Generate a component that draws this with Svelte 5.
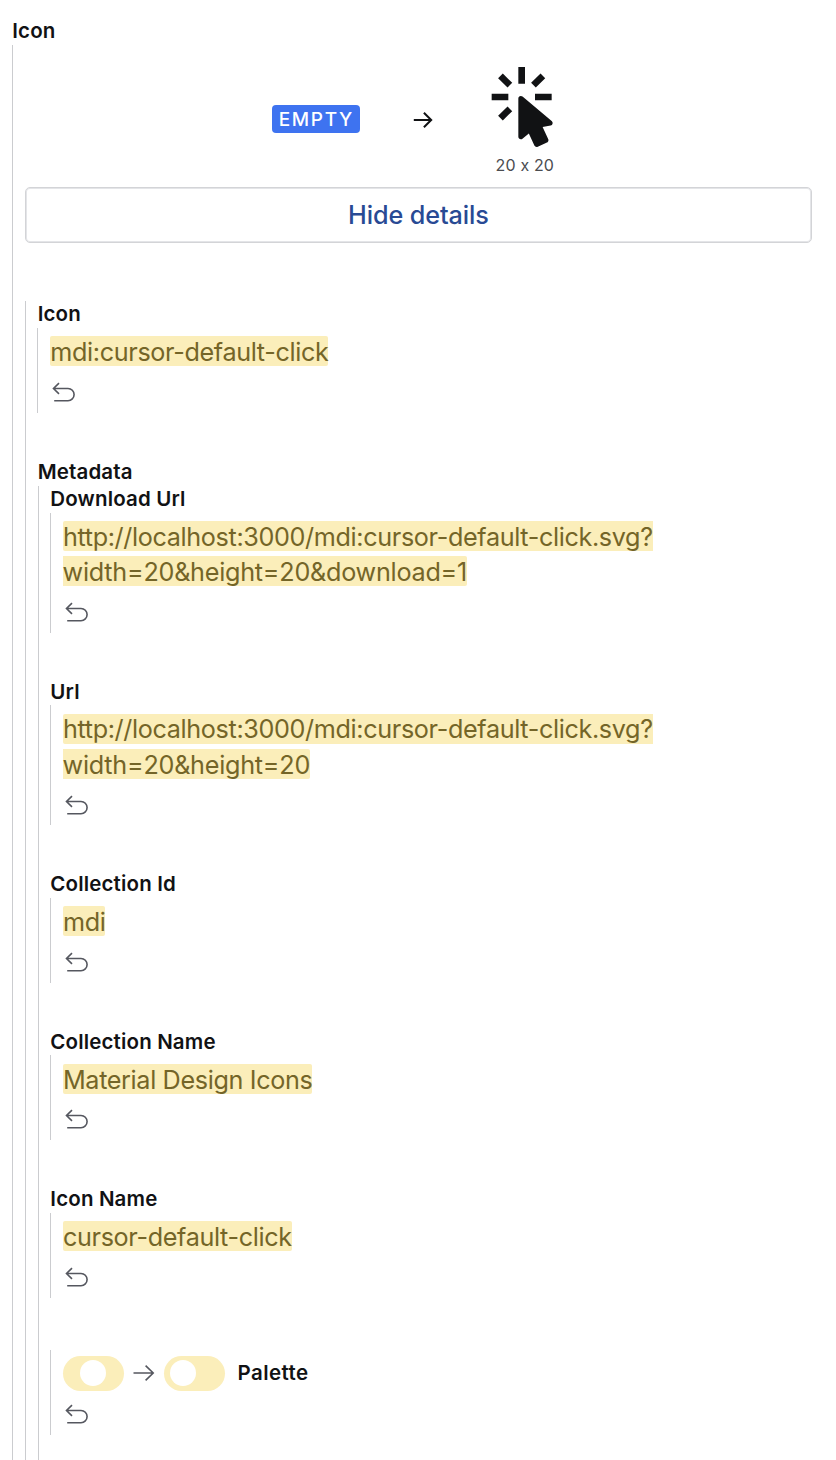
<script>
  const details = [
    { label: 'Download Url', lines: ['http://localhost:3000/mdi:cursor-default-click.svg?', 'width=20&height=20&download=1'] },
    { label: 'Url', lines: ['http://localhost:3000/mdi:cursor-default-click.svg?', 'width=20&height=20'] },
    { label: 'Collection Id', lines: ['mdi'] },
    { label: 'Collection Name', lines: ['Material Design Icons'] },
    { label: 'Icon Name', lines: ['cursor-default-click'] },
  ];
</script>

{#snippet undo()}
  <button class="undo" aria-label="Revert">
    <svg width="24" height="22" viewBox="0 0 24 22">
      <path d="M7 1.2 1.5 6.5 7 11.8M1.7 6.5H16a6.1 6.1 0 0 1 0 12.2H2.2" />
    </svg>
  </button>
{/snippet}

{#snippet field(label, lines)}
  <section class="field">
    <h3>{label}</h3>
    <div class="body leaf">
      <div class="value">
        <ins>{#each lines as line, i}{#if i > 0}<br />{/if}<span class:second={i > 0}>{line}</span>{/each}</ins>
      </div>
      {@render undo()}
    </div>
  </section>
{/snippet}

<main>
  <h3>Icon</h3>
  <div class="body root">
    <div class="preview">
      <span class="empty">EMPTY</span>
      <svg class="arrow" width="20" height="18" viewBox="0 0 20 18">
        <path d="M.8 9H18M10.9 1.7 18.2 9l-7.3 7.3" />
      </svg>
      <figure>
        <svg width="80" height="80" viewBox="0 0 24 24">
          <path d="M10.76,8.69A0.76,0.76 0 0,0 10,9.45V20.9C10,21.32 10.34,21.66 10.76,21.66C10.95,21.66 11.11,21.6 11.24,21.5L13.15,19.95L14.81,23.57C14.94,23.84 15.21,24 15.5,24C15.61,24 15.72,24 15.83,23.92L18.59,22.64C18.97,22.46 19.15,22 18.95,21.63L17.28,18L19.69,17.55C19.85,17.5 20,17.43 20.12,17.29C20.39,16.97 20.35,16.5 20,16.21L11.26,8.86L11.25,8.87C11.12,8.76 10.95,8.69 10.76,8.69M15,10V8H20V10H15M13.83,4.76L16.66,1.93L18.07,3.34L15.24,6.17L13.83,4.76M10,0H12V5H10V0M3.93,14.66L6.76,11.83L8.17,13.24L5.34,16.07L3.93,14.66M3.93,3.34L5.34,1.93L8.17,4.76L6.76,6.17L3.93,3.34M7,10H2V8H7V10" />
        </svg>
        <figcaption>20 x 20</figcaption>
      </figure>
    </div>
    <button class="toggle-details">Hide details</button>

    <div class="body group">
      {@render field('Icon', ['mdi:cursor-default-click'])}
      <section class="metadata">
        <h3>Metadata</h3>
        <div class="body group-inner">
          {#each details as d}
            {@render field(d.label, d.lines)}
          {/each}
          <div class="body leaf palette">
            <div class="switches">
              <span class="switch middle"></span>
              <svg class="to" width="22" height="18" viewBox="0 0 22 18">
                <path d="M.5 9H20M12.6 1.6 20.2 9l-7.6 7.4" />
              </svg>
              <span class="switch"></span>
              <h3>Palette</h3>
            </div>
            {@render undo()}
          </div>
        </div>
      </section>
    </div>
  </div>
</main>

<style>
  :global(body) {
    background: #fff;
    overflow: hidden;
  }
  main {
    box-sizing: border-box;
    height: 1460px;
    overflow: hidden;
    padding: 18px 24px 0 12.3px;
    font-family: Inter, sans-serif;
    color: #111214;
  }
  h3 {
    margin: 0;
    font-size: 20.5px;
    font-weight: 600;
    line-height: 26.7px;
    letter-spacing: 0.15px;
  }
  .body {
    border-left: 1px solid #cbcccf;
    padding-left: 11.55px;
  }
  .root {
    height: 1500px;
  }
  .preview {
    display: flex;
    align-items: center;
    height: 142.5px;
    padding-left: 247px;
  }
  .empty {
    box-sizing: border-box;
    width: 88px;
    height: 28px;
    margin-top: 6px;
    padding-left: 1px;
    border-radius: 4px;
    background: #3e73f0;
    color: #fff;
    font-size: 19px;
    font-weight: 500;
    line-height: 30px;
    letter-spacing: 1.7px;
    text-align: center;
  }
  svg path {
    fill: none;
    stroke: #55575f;
    stroke-width: 1.6;
  }
  svg.arrow {
    margin: 8px 0 0 52.7px;
  }
  svg.arrow path {
    stroke: #111214;
    stroke-width: 2;
  }
  figure {
    margin: 10px 0 0 52.3px;
    width: 80px;
    text-align: center;
  }
  figure svg {
    display: block;
  }
  figure svg path {
    fill: #111214;
    stroke: none;
  }
  figcaption {
    margin-top: 8px;
    font-size: 16px;
    line-height: 20px;
    letter-spacing: 0.15px;
    color: #4b4c50;
  }
  .toggle-details {
    display: block;
    box-sizing: border-box;
    width: 100%;
    height: 56px;
    margin-bottom: 58px;
    border: 1px solid #d3d4d7;
    border-radius: 5px;
    box-shadow: inset 0 0 0 1px #e4e5e8;
    background: #fff;
    color: #284a94;
    font: 500 25.2px / 53px Inter, sans-serif;
    letter-spacing: -0.1px;
    padding: 0;
  }
  .group {
    height: 1300px;
  }
  .group h3 {
    padding-left: 0.3px;
  }
  .metadata {
    padding-top: 0.5px;
  }
  .group-inner {
    height: 1100px;
    margin-left: 0.4px;
    padding-left: 11.25px;
  }
  .field {
    padding-bottom: 45.8px;
  }
  .leaf {
    padding-top: 6.5px;
  }
  .value {
    font-size: 25.2px;
    line-height: 35.25px;
    letter-spacing: -0.36px;
  }
  ins {
    margin-left: 0.4px;
    background: #fbeeba;
    color: #746528;
    text-decoration: none;
    border-radius: 2px;
  }
  ins span {
    position: relative;
    top: 0.7px;
  }
  .second {
    letter-spacing: -0.25px;
  }
  .undo {
    display: block;
    box-sizing: border-box;
    height: 43.2px;
    border: 0;
    padding: 0 0 0 2px;
    background: none;
  }
  .undo svg {
    display: block;
    margin-top: 3.4px;
  }
  .palette {
    margin-top: 6.2px;
  }
  .switches {
    display: flex;
    align-items: center;
    height: 35.2px;
    margin-top: -0.5px;
    margin-bottom: 0.5px;
  }
  .switch {
    box-sizing: border-box;
    width: 61px;
    height: 35px;
    padding: 4.5px 6px;
    border-radius: 18px;
    background: #fbeeba;
  }
  .switch::before {
    content: '';
    display: block;
    width: 26px;
    height: 26px;
    border-radius: 50%;
    background: #fff;
  }
  .middle::before {
    margin-left: 11.8px;
  }
  .to {
    margin: 0 8.5px 0 9.5px;
  }
  .switches h3 {
    margin: 0.6px 0 0 12.6px;
    letter-spacing: 0.45px;
  }
</style>
